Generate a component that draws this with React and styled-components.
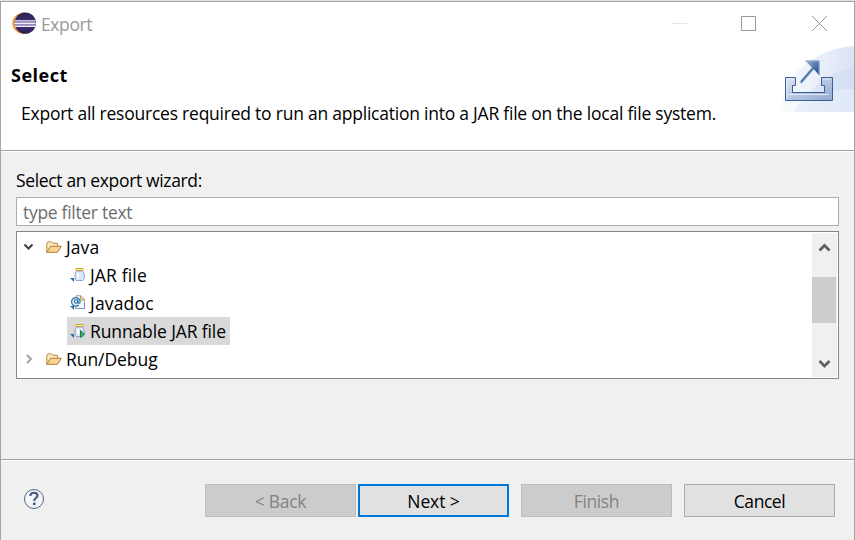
import React from "react";
import styled, { createGlobalStyle } from "styled-components";

const Global = createGlobalStyle`
  * { box-sizing: border-box; }
  body { margin: 0; background: #f0f0f0; overflow: hidden; }
  button { font: inherit; }
`;

const Dialog = styled.main`
  width: 855px;
  height: 540px;
  display: flex;
  flex-direction: column;
  border-top: 1px solid #e2e2e2;
  background: #f0f0f0;
  color: #000;
  font: 17.5px/28px "Open Sans", "Noto Sans", sans-serif;
  white-space: nowrap;
`;

const Frame = styled.div`
  flex: 1;
  display: flex;
  flex-direction: column;
  border: 1px solid #a5a5a5;
  border-bottom: 0;
`;

const Label = styled.span`
  display: inline-block;
  letter-spacing: ${(p) => p.$track || 0}px;
`;

const TitleBar = styled.header`
  height: 43px;
  display: flex;
  align-items: center;
  padding: 0 28px 0 11px;
  background: #fff;
  color: #999;
`;

const Title = styled.div`
  flex: 1;
  padding: 1px 0 0 4px;
`;

const WindowButtons = styled.div`
  display: grid;
  grid-template-columns: 15px 15px 16px;
  column-gap: 54px;
`;

const CloseSlot = styled.div`
  margin-left: 2px;
`;

const Banner = styled.section`
  height: 106px;
  flex: none;
  display: flex;
  justify-content: space-between;
  background: #fff;
  border-bottom: 1px solid #a0a0a0;
`;

const BannerText = styled.div`
  padding: 16px 0 0 10px;
`;

const Heading = styled.h1`
  margin: 0;
  font-size: 18px;
  line-height: 28px;
  font-weight: 700;
`;

const Description = styled.p`
  margin: 10px 0 0 10px;
`;

const Body = styled.section`
  height: 309px;
  flex: none;
  display: flex;
  flex-direction: column;
  padding: 14px 15px 0;
  border-top: 1px solid #fff;
  border-bottom: 1px solid #a0a0a0;
`;

const Filter = styled.div`
  height: 29px;
  flex: none;
  margin-top: 3px;
  padding: 0 6px;
  background: #fff;
  border: 1px solid #abadb3;
  color: #6d6d6d;
`;

const Tree = styled.div`
  height: 148px;
  flex: none;
  margin-top: 5px;
  display: flex;
  padding: 1px;
  background: #fff;
  border: 1px solid #828790;
`;

const Rows = styled.div`
  flex: 1;
`;

const Row = styled.div`
  height: 28px;
  display: flex;
  align-items: center;
  padding-left: ${(p) => (p.$leaf ? 49 : 4)}px;
`;

const Item = styled.div`
  height: 28px;
  display: flex;
  align-items: center;
  padding: 0 4px 0 ${(p) => (p.$folder ? 4 : 3)}px;
  gap: ${(p) => (p.$folder ? 4 : 3)}px;
  background: ${(p) => (p.$selected ? "#d9d9d9" : "transparent")};
`;

const ScrollBar = styled.div`
  width: 25px;
  display: flex;
  flex-direction: column;
  align-items: flex-start;
  justify-content: space-between;
  background: #f0f0f0;
`;

const Thumb = styled.div`
  width: 24px;
  height: 46px;
  margin-bottom: 10px;
  background: #cdcdcd;
`;

const Footer = styled.footer`
  flex: 1;
  display: flex;
  align-items: flex-start;
  padding: 23px 19px 0 22px;
  border-top: 1px solid #fff;
`;

const HelpSlot = styled.div`
  flex: 1;
  padding-top: 4px;
`;

const Actions = styled.div`
  display: flex;
  gap: 12px;
`;

const Pair = styled.div`
  display: flex;
  gap: 2px;
`;

const Button = styled.button`
  width: 151px;
  height: 33px;
  padding: 1px 0 0;
  line-height: 28px;
  color: #000;
  background: #e1e1e1;
  border: 1px solid #adadad;
  ${(p) => p.$primary && "border: 2px solid #0078d7; padding-top: 1px;"}
  &:disabled { color: #838383; background: #ccc; border-color: #bfbfbf; }
`;

const Svg = styled.svg`
  display: block;
  flex: none;
`;

const EclipseIcon = () => (
  <Svg width="25" height="24" viewBox="0 0 25 24">
    <defs>
      <linearGradient id="ecl" x2="0" y2="1">
        <stop stopColor="#2b2050" />
        <stop offset=".6" stopColor="#41307c" />
        <stop offset="1" stopColor="#2a1d50" />
      </linearGradient>
    </defs>
    <path d="M12 .3C5 1 .2 5.500 .2 11.200C.2 17 5 21.500 12 22L17 19.500L17 2.500Z" fill="#f2a03c" />
    <circle cx="13.300" cy="11.100" r="10.700" fill="url(#ecl)" />
    <path d="M3 8.800H23.400M2.400 11.600H23.800M3 14.500H23.400" stroke="#f1eff7" strokeWidth="1.200" />
    <path d="M2.600 10.200H23.600M2.600 13.100H23.600" stroke="#a69bc4" strokeWidth="1.600" />
  </Svg>
);

const MinimizeIcon = () => (
  <Svg width="15" height="15"><path d="M0 7.500H15" stroke="#e5e5e5" /></Svg>
);
const MaximizeIcon = () => (
  <Svg width="15" height="15"><path d="M.5.5H14.500V14.500H.5Z" fill="none" stroke="#999" /></Svg>
);
const CloseIcon = () => (
  <Svg width="15" height="15"><path d="M0 0L15 15M15 0L0 15" stroke="#999" fill="none" /></Svg>
);

const ArtSvg = styled(Svg)`
  margin-top: 1px;
`;

const ExportArt = () => (
  <ArtSvg width="75" height="66" viewBox="0 0 75 66">
    <defs>
      <linearGradient id="sky" x1="0" x2="1">
        <stop stopColor="#f9fbfe" />
        <stop offset="1" stopColor="#dbe4f6" />
      </linearGradient>
      <linearGradient id="tray" x2="1" y2="1">
        <stop stopColor="#dce5f2" />
        <stop offset="1" stopColor="#91a9cd" />
      </linearGradient>
      <linearGradient id="head" x2="1" y2=".8">
        <stop stopColor="#a2b7d8" />
        <stop offset="1" stopColor="#204a87" />
      </linearGradient>
    </defs>
    <path d="M0 66C2 48 17 5 75 0V66Z" fill="url(#sky)" />
    <path d="M15 66C30 42 52 25 75 21V66Z" fill="#c9d7f2" opacity=".4" />
    <path d="M0 66C20 51 48 43 75 43V66Z" fill="#fff" opacity=".3" />
    <path d="M6.500 31.500H16.500V39.500H13.500V46.500H45.500V39.500H42.500V31.500H53.500V54.500H6.500Z" fill="url(#tray)" stroke="#3a5f96" />
    <path d="M8 53V33H15M44 33H52M8 48.500H50" fill="none" stroke="#eef3fa" opacity=".8" />
    <path d="M21.500 37L35 21" stroke="#a9bbd8" strokeWidth="3.200" />
    <path d="M22 36L36 20" stroke="#44689f" strokeWidth="1.500" />
    <path d="M26 14.500H40.500V29.500L35.500 24L31 19.500Z" fill="url(#head)" />
    <path d="M26 15H40V29" fill="none" stroke="#9db2d2" />
  </ArtSvg>
);

const Expander = ({ open }) => (
  <Svg width="20" height="20">
    {open ? (
      <path d="M2.500 7.500L6.500 11.500L10.500 7.500" fill="none" stroke="#404040" strokeWidth="2" />
    ) : (
      <path d="M5 6L9 10L5 14" fill="none" stroke="#a6a6a6" strokeWidth="2" />
    )}
  </Svg>
);

const FolderIcon = () => (
  <Svg width="16" height="14" viewBox="0 0 16 14">
    <path d="M.8 12.300V3.500L2 1.800H5.500L7 3.300H11.500V6" fill="#fbeac0" stroke="#bb8540" />
    <path d="M.8 12.300L4.500 6.300H15.300L11.500 12.300Z" fill="#f8d694" stroke="#b77b34" />
  </Svg>
);

const Corner = () => <path d="M0 11H4V15Z" fill="#2d6ca2" />;

const JarIcon = ({ run }) => (
  <Svg width="17" height="16" viewBox="0 0 17 16">
    <Corner />
    <path d="M7 4C5 5.500 5 7 5 10.500C5 13 5.700 13.500 7 13.500H12C13.700 13.500 14.300 12.500 14.300 10C14.300 7 13.700 5.500 12.500 4Z" fill="#dce8f8" stroke="#8fa6cc" />
    <path d="M8 6V11" stroke="#fff" strokeWidth="2" />
    <rect x="5.500" y="1.500" width="8" height="2" rx="1" fill="#f8e49b" stroke="#cfa536" />
    {run && <path d="M10.500 7.500L14.500 11L10.500 14.500Z" fill="#46ae64" stroke="#198142" />}
  </Svg>
);

const JavadocIcon = () => (
  <Svg width="17" height="16" viewBox="0 0 17 16">
    <Corner />
    <path d="M6 .7H11L14.500 4.200V13.500H5.500Z" fill="#f3f7ff" stroke="#b4a477" />
    <path d="M10.500 1V5H14.500" fill="#e4cf98" stroke="#b7a16a" />
    <path d="M6 13.500H14.500V7" fill="none" stroke="#7b91bd" />
    <circle cx="6" cy="6.500" r="4.800" fill="#eaf3fc" />
    <path d="M8.800 10A4.300 4.300 0 1 1 10.100 6.200C10.200 8.500 8.200 8.800 7.800 7.500V4.500" fill="none" stroke="#286ca8" strokeWidth="1.200" />
    <circle cx="6" cy="6.500" r="1.700" fill="none" stroke="#286ca8" strokeWidth="1.100" />
  </Svg>
);

const ScrollArrow = ({ down }) => (
  <Svg width="24" height="30">
    <path d={down ? "M7.500 14L12.500 19L17.500 14" : "M7.500 17.500L12.500 12.500L17.500 17.500"} fill="none" stroke="#606060" strokeWidth="2.700" />
  </Svg>
);

const HelpIcon = () => (
  <Svg width="22" height="22">
    <circle cx="11" cy="11" r="9.500" fill="#f4f5f7" stroke="#526788" />
    <path d="M7.500 8V6.500C8.500 4.300 14.500 4 14.500 7.500C14.500 10 11.200 9.800 11.200 13" fill="none" stroke="#4c628a" strokeWidth="2.300" />
    <rect x="9.900" y="14.600" width="2.700" height="2.500" fill="#4c628a" />
  </Svg>
);

export default function App() {
  return (
    <Dialog>
      <Global />
      <Frame>
        <TitleBar>
          <EclipseIcon />
          <Title><Label $track={-0.4}>Export</Label></Title>
          <WindowButtons>
            <MinimizeIcon />
            <MaximizeIcon />
            <CloseSlot><CloseIcon /></CloseSlot>
          </WindowButtons>
        </TitleBar>
        <Banner>
          <BannerText>
            <Heading><Label $track={0.5}>Select</Label></Heading>
            <Description>
              <Label $track={-0.232}>Export all resources required to run an application into a JAR file on the local file system.</Label>
            </Description>
          </BannerText>
          <ExportArt />
        </Banner>
        <Body>
          <Label $track={-0.35}>Select an export wizard:</Label>
          <Filter><Label $track={-0.3}>type filter text</Label></Filter>
          <Tree>
            <Rows>
              <Row><Expander open /><Item $folder><FolderIcon /><Label $track={0.1}>Java</Label></Item></Row>
              <Row $leaf><Item><JarIcon /><Label $track={0.15}>JAR file</Label></Item></Row>
              <Row $leaf><Item><JavadocIcon /><Label $track={0.18}>Javadoc</Label></Item></Row>
              <Row $leaf><Item $selected><JarIcon run /><Label $track={-0.12}>Runnable JAR file</Label></Item></Row>
              <Row><Expander /><Item $folder><FolderIcon /><Label $track={-0.06}>Run/Debug</Label></Item></Row>
            </Rows>
            <ScrollBar><ScrollArrow /><Thumb /><ScrollArrow down /></ScrollBar>
          </Tree>
        </Body>
        <Footer>
          <HelpSlot><HelpIcon /></HelpSlot>
          <Actions>
            <Pair>
              <Button disabled><Label $track={-0.3}>&lt; Back</Label></Button>
              <Button $primary><Label $track={-0.1}>Next &gt;</Label></Button>
            </Pair>
            <Button disabled><Label $track={-0.4}>Finish</Label></Button>
            <Button><Label $track={-0.45}>Cancel</Label></Button>
          </Actions>
        </Footer>
      </Frame>
    </Dialog>
  );
}
